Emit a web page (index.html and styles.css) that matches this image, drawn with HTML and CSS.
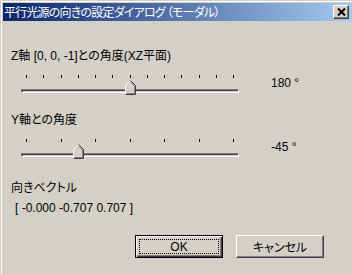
FILE: index.html
```html
<!DOCTYPE html>
<html lang="ja">
<head>
    <meta charset="UTF-8">
    <title>平行光源の向きの設定ダイアログ（モーダル）</title>
    <link rel="stylesheet" href="styles.css">
</head>
<body>
    <div class="dialog">
        <div class="titlebar">
            <span class="title">平行光源の向きの設定ダイアログ （モーダル）</span>
            <span class="close-btn">
                <svg width="9" height="8" viewBox="0 0 9 8">
                    <path d="M1 0.5L8 7.5M8 0.5L1 7.5" stroke="#000" stroke-width="2" fill="none"/>
                </svg>
            </span>
        </div>

        <div class="content">
            <!-- Z軸との角度 -->
            <div class="label">Z軸 [0, 0, -1]との角度(XZ平面)</div>
            <div class="slider-row">
                <div class="slider">
                    <div class="ticks">
                        <i></i><i></i><i></i><i></i><i></i><i></i><i></i>
                        <i></i><i></i><i></i><i></i><i></i><i></i>
                    </div>
                    <div class="track"></div>
                    <svg class="thumb" style="left: 104px" width="11" height="15" viewBox="0 0 11 15">
                        <path d="M1 6L5.5 1.5L10 6V14H1z" fill="#d4d0c8"/>
                        <path d="M0.5 14.5V5.5L5.5 0.5" fill="none" stroke="#fff"/>
                        <path d="M5.5 0.5L10.5 5.5V14.5H0.5" fill="none" stroke="#404040"/>
                        <path d="M6 2.5L9.5 6V13.5H1.5" fill="none" stroke="#808080"/>
                    </svg>
                </div>
                <div class="value">180 °</div>
            </div>

            <!-- Y軸との角度 -->
            <div class="label label-y">Y軸との角度</div>
            <div class="slider-row">
                <div class="slider">
                    <div class="ticks">
                        <i></i><i></i><i></i><i></i><i></i><i></i><i></i>
                    </div>
                    <div class="track"></div>
                    <svg class="thumb" style="left: 52px" width="11" height="15" viewBox="0 0 11 15">
                        <path d="M1 6L5.5 1.5L10 6V14H1z" fill="#d4d0c8"/>
                        <path d="M0.5 14.5V5.5L5.5 0.5" fill="none" stroke="#fff"/>
                        <path d="M5.5 0.5L10.5 5.5V14.5H0.5" fill="none" stroke="#404040"/>
                        <path d="M6 2.5L9.5 6V13.5H1.5" fill="none" stroke="#808080"/>
                    </svg>
                </div>
                <div class="value">-45 °</div>
            </div>

            <!-- 向きベクトル -->
            <div class="label label-vec">向きベクトル</div>
            <div class="vector">[ -0.000 -0.707 0.707 ]</div>

            <div class="buttons">
                <button class="btn btn-default"><span class="focus">OK</span></button>
                <button class="btn">キャンセル</button>
            </div>
        </div>
    </div>
</body>
</html>
```

FILE: styles.css
```css
html, body {
    margin: 0;
    height: 100%;
    background: #d4d0c8;
}
body {
    font-family: "Liberation Sans", "Noto Sans CJK JP", sans-serif;
    font-size: 12px;
    color: #000;
    overflow: hidden;
}
.dialog {
    height: 100%;
    box-sizing: border-box;
    border-left: 1px solid #d4d0c8;
    border-top: 1px solid #d4d0c8;
    box-shadow: inset 1px 1px 0 #fff;
    padding: 2px 0 0 2px;
}
.titlebar {
    height: 18px;
    display: flex;
    align-items: center;
    justify-content: space-between;
    padding: 0 3px 0 1px;
    background: linear-gradient(to right, #0a246a, #a6caf0);
}
.title {
    color: #fff;
    font-family: "Noto Sans CJK JP", sans-serif;
    font-feature-settings: "palt" 1;
    font-size: 12px;
    letter-spacing: -0.8px;
    line-height: 14px;
}
.close-btn {
    width: 16px;
    height: 14px;
    box-sizing: border-box;
    background: #d4d0c8;
    border: 1px solid;
    border-color: #fff #404040 #404040 #fff;
    box-shadow: inset -1px -1px 0 #808080;
    display: flex;
    align-items: center;
    justify-content: center;
}
.content {
    padding: 0 0 0 8px;
}
.label {
    font-feature-settings: "palt" 1;
    line-height: 14px;
    margin-top: 28px;
}
.label-y {
    margin-top: 18px;
}
.label-vec {
    margin-top: 22px;
}
.slider-row {
    display: flex;
    align-items: flex-start;
    margin-top: 12px;
}
.slider {
    position: relative;
    width: 218px;
    height: 20px;
    margin-left: 10px;
}
.ticks {
    display: flex;
    justify-content: space-between;
    margin: 0 5px;
}
.ticks i {
    width: 1px;
    height: 3px;
    background: #000;
}
.track {
    margin-top: 11px;
    height: 4px;
    box-sizing: border-box;
    border: 1px solid;
    border-color: #808080 #fff #fff #808080;
    box-shadow: inset 1px 1px 0 #404040;
}
.thumb {
    position: absolute;
    top: 5px;
}
.value {
    margin-left: 32px;
    margin-top: 1px;
    line-height: 14px;
}
.vector {
    line-height: 14px;
    margin-top: 6px;
    padding-left: 4px;
}
.buttons {
    display: flex;
    gap: 13px;
    margin-top: 20px;
    padding-left: 124px;
}
.btn {
    width: 88px;
    height: 23px;
    margin: 0;
    padding: 0;
    font-family: "Noto Sans CJK JP", sans-serif;
    font-feature-settings: "palt" 1;
    font-size: 12px;
    color: #000;
    background: #d4d0c8;
    border: 1px solid;
    border-color: #fff #404040 #404040 #fff;
    box-shadow: inset -1px -1px 0 #808080;
    display: flex;
    align-items: center;
    justify-content: center;
}
.btn-default {
    border: 1px solid #000;
    box-shadow: inset 1px 1px 0 #fff, inset -1px -1px 0 #404040, inset -2px -2px 0 #808080;
    padding: 3px;
}
.focus {
    flex: 1;
    align-self: stretch;
    display: flex;
    align-items: center;
    justify-content: center;
    border: 1px dotted #000;
    font-family: "Liberation Sans", sans-serif;
}
```
